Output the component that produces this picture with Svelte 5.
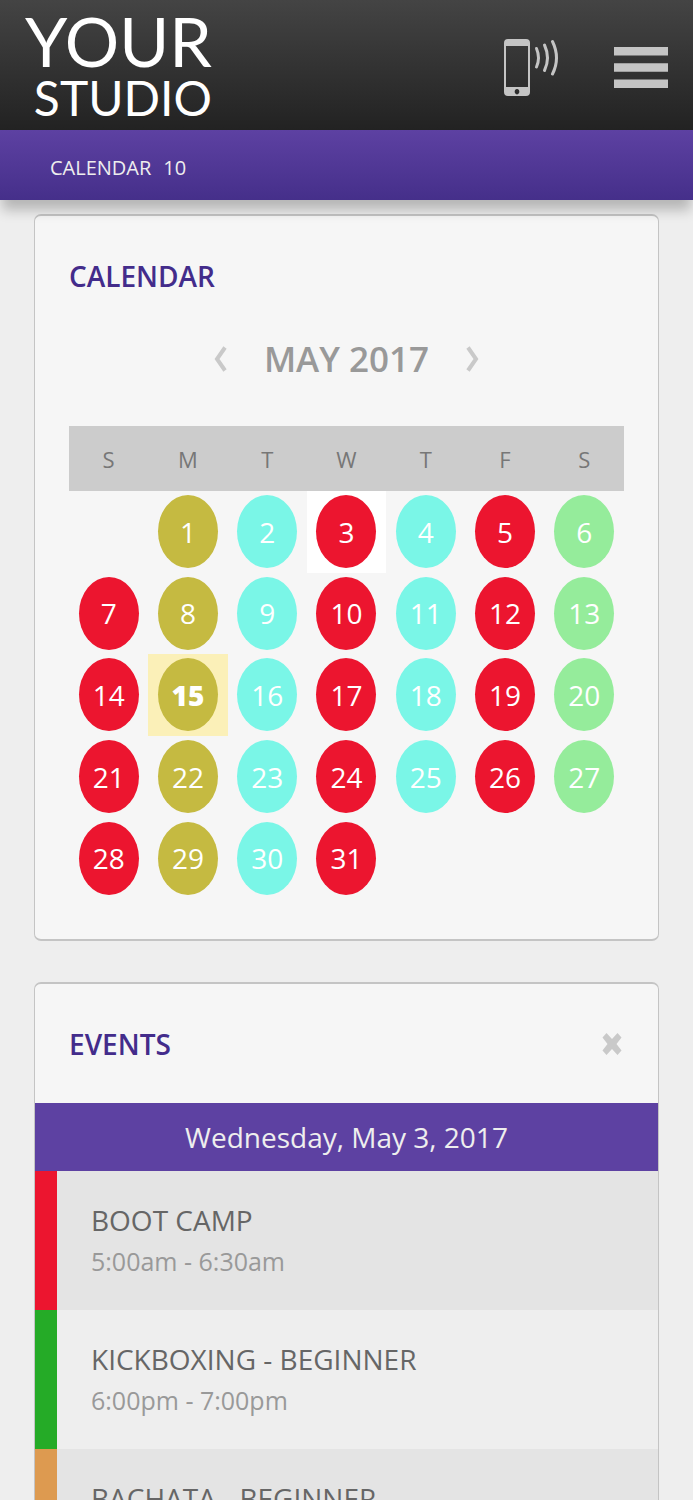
<script>
	const weekdays = ['S', 'M', 'T', 'W', 'T', 'F', 'S'];
	const dayColors = ['red', 'olive', 'aqua', 'red', 'aqua', 'red', 'green'];

	const FIRST_WEEKDAY = 1;
	const DAYS_IN_MONTH = 31;
	const TODAY = 15;

	let selected = $state(3);

	const weeks = [];
	for (let start = 1 - FIRST_WEEKDAY; start <= DAYS_IN_MONTH; start += 7) {
		weeks.push(
			weekdays.map((_, i) => {
				const day = start + i;
				return day > 0 && day <= DAYS_IN_MONTH ? day : null;
			})
		);
	}

	const events = [
		{ title: 'BOOT CAMP', time: '5:00am - 6:30am', color: '#ec152f' },
		{ title: 'KICKBOXING - BEGINNER', time: '6:00pm - 7:00pm', color: '#25ab27' },
		{ title: 'BACHATA - BEGINNER', color: '#dd9a50' }
	];
</script>

<div class="page">
	<header>
		<div class="topbar">
			<a class="logo" href="#home">
				<span class="logo-your">YOUR</span>
				<span class="logo-studio">STUDIO</span>
			</a>
			<div class="actions">
				<button aria-label="Call">
					<svg width="56" height="58" viewBox="0 0 56 58">
						<path
							fill="#c4c4c4"
							fill-rule="evenodd"
							d="M4 0h18q4 0 4 4v49q0 4-4 4H4q-4 0-4-4V4q0-4 4-4zM2 7v41h22V7zM13 50a2.3 2.7 0 1 0 .01 0z"
						/>
						<g fill="none" stroke="#c4c4c4" stroke-width="3" stroke-linecap="round">
							<path d="M32.500 9.500q4 9.500 0 18.500" />
							<path d="M40.500 6q6 13 0 25.500" />
							<path d="M48.500 2.500q8 16.500 0 32.500" />
						</g>
					</svg>
				</button>
				<button aria-label="Menu">
					<svg width="54" height="42" viewBox="0 0 54 42">
						<path fill="#c4c4c4" d="M0 0h54v8.500H0zM0 16.300h54v8.500H0zM0 32.500h54V41H0z" />
					</svg>
				</button>
			</div>
		</div>
		<nav>
			<a href="#calendar">CALENDAR</a>
			<span>10</span>
		</nav>
	</header>

	<main>
		<section class="card calendar" id="calendar">
			<h2>CALENDAR</h2>
			<div class="month">
				<button aria-label="Previous month">
					<svg width="13" height="26" viewBox="0 0 13 26">
						<path d="M11 1.500L3 13l8 11.500" fill="none" stroke="#c9c9c9" stroke-width="4" />
					</svg>
				</button>
				<h3>MAY 2017</h3>
				<button aria-label="Next month">
					<svg width="13" height="26" viewBox="0 0 13 26">
						<path d="M2 1.500L10 13 2 24.500" fill="none" stroke="#c9c9c9" stroke-width="4" />
					</svg>
				</button>
			</div>
			<table>
				<thead>
					<tr>
						{#each weekdays as name}
							<th scope="col">{name}</th>
						{/each}
					</tr>
				</thead>
				<tbody>
					{#each weeks as week}
						<tr>
							{#each week as day, i}
								<td class:today={day === TODAY} class:selected={day === selected}>
									{#if day}
										<button class="day {dayColors[i]}" onclick={() => (selected = day)}>{day}</button>
									{/if}
								</td>
							{/each}
						</tr>
					{/each}
				</tbody>
			</table>
		</section>

		<section class="card events">
			<div class="events-head">
				<h2>EVENTS</h2>
				<button aria-label="Close events">
					<svg width="20" height="24" viewBox="0 0 20 24">
						<path
							d="M4.500 1L10 7 15.500 1 19.500 5.500 14.500 12l5 6.500-4 4.500L10 17 4.500 23 .5 18.500 5.500 12 .5 5.500z"
							fill="#c9c9c9"
						/>
					</svg>
				</button>
			</div>
			<div class="date">Wednesday, May 3, 2017</div>
			<ul>
				{#each events as event}
					<li style="border-left-color: {event.color}">
						<div class="title">{event.title}</div>
						{#if event.time}
							<div class="time">{event.time}</div>
						{/if}
					</li>
				{/each}
			</ul>
		</section>
	</main>
</div>

<style>
	:global(body) {
		margin: 0;
		background: #eee;
		font-family: 'Open Sans', 'Noto Sans', sans-serif;
	}

	.page {
		height: 100vh;
		overflow: hidden;
	}

	button {
		display: block;
		padding: 0;
		border: 0;
		background: none;
		font: inherit;
		cursor: pointer;
	}

	svg {
		display: block;
	}

	h2,
	h3 {
		margin: 0;
		font-weight: 600;
	}

	header {
		position: relative;
		z-index: 1;
		box-shadow: 0 12px 12px -2px rgba(0, 0, 0, 0.24);
	}

	.topbar {
		display: flex;
		align-items: center;
		justify-content: space-between;
		height: 130px;
		padding: 6px 25px 0;
		box-sizing: border-box;
		background: linear-gradient(#444, #222);
	}

	.logo {
		display: flex;
		flex-direction: column;
		align-items: flex-end;
		color: #fff;
		font-family: Lato, 'Open Sans', sans-serif;
		text-decoration: none;
	}

	.logo-your {
		font-size: 68px;
		line-height: 60px;
	}

	.logo-studio {
		font-size: 48px;
		line-height: 54px;
	}

	.actions {
		display: flex;
		align-items: center;
		gap: 54px;
	}

	nav {
		display: flex;
		align-items: center;
		gap: 12px;
		height: 70px;
		padding: 4px 50px 0;
		box-sizing: border-box;
		background: linear-gradient(#5d41a2, #452f8a);
		color: #eee;
		font-size: 20px;
	}

	nav a {
		color: inherit;
		text-decoration: none;
	}

	main {
		display: flex;
		flex-direction: column;
		gap: 41px;
		padding: 14px 34px;
	}

	.card {
		border: solid #c4c4c4;
		border-width: 2px 1px;
		border-radius: 7px;
		background: #f6f6f6;
		overflow: hidden;
	}

	.calendar {
		padding: 40px 34px;
	}

	h2 {
		color: #432c8b;
		font-size: 28px;
		line-height: 40px;
	}

	.month {
		display: flex;
		align-items: center;
		justify-content: center;
		gap: 37px;
		padding: 28px 0 32px;
	}

	h3 {
		color: #999;
		font-size: 35px;
		line-height: 70px;
	}

	table {
		width: 100%;
		height: 473px;
		border-collapse: collapse;
		table-layout: fixed;
	}

	th {
		height: 65px;
		padding: 0;
		background: #ccc;
		color: #777;
		font-size: 22px;
		font-weight: 400;
	}

	td {
		padding: 0;
	}

	.today {
		background: #fbf0b8;
	}

	.today .day {
		font-weight: 800;
	}

	.selected {
		background: #fff;
	}

	.day {
		width: 60px;
		height: 73px;
		margin: 0 auto;
		border-radius: 50%;
		color: #fff;
		font-size: 28px;
	}

	.red {
		background: #ec152f;
	}

	.olive {
		background: #c5ba41;
	}

	.aqua {
		background: #7af6e7;
	}

	.green {
		background: #95ec9b;
	}

	.events-head {
		display: flex;
		align-items: center;
		justify-content: space-between;
		height: 119px;
		padding: 0 36px 0 34px;
	}

	.date {
		background: #5d41a2;
		color: #eee;
		font-size: 28px;
		line-height: 68px;
		text-align: center;
	}

	ul {
		margin: 0;
		padding: 0;
		list-style: none;
	}

	li {
		height: 139px;
		padding: 29px 34px;
		border-left: 22px solid;
		box-sizing: border-box;
		background: #e4e4e4;
	}

	li:nth-child(even) {
		background: #eee;
	}

	.title {
		color: #666;
		font-size: 28px;
		line-height: 41px;
	}

	.time {
		color: #999;
		font-size: 25px;
		line-height: 40px;
	}
</style>
